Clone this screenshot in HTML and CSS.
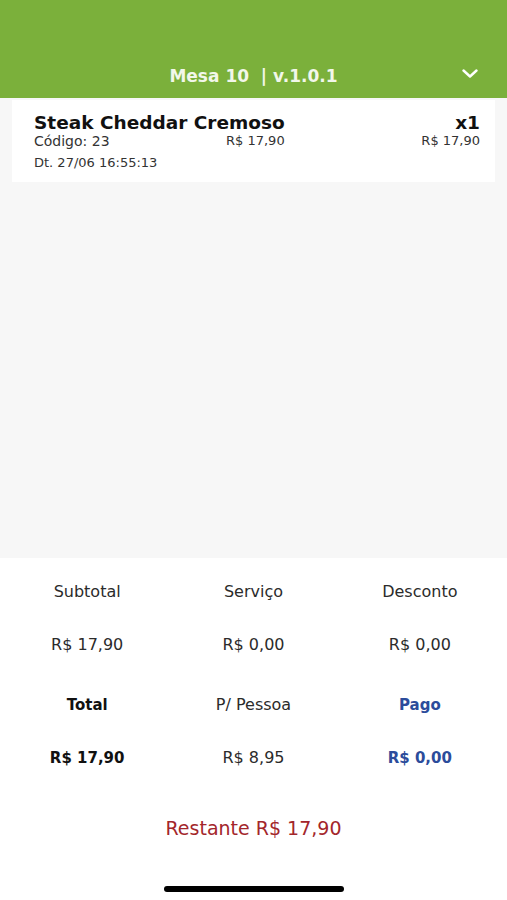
FILE: index.html
```html
<!DOCTYPE html>
<html>
  <head>
    <meta charset="utf-8">
    <link rel="stylesheet" href="styles.css">
  </head>
  <body>
    <div class="app">
      <div class="header">
        <div class="title">Mesa 10 &nbsp;| v.1.0.1</div>
        <svg class="chevron" width="16" height="9" viewBox="0 0 16 9">
          <polyline points="1.5,1.5 8,7.5 14.5,1.5" fill="none" stroke="#ffffff" stroke-width="2.4" stroke-linecap="round" stroke-linejoin="round"/>
        </svg>
      </div>

      <div class="orders">
        <div class="item">
          <div class="item-row">
            <div class="item-name">Steak Cheddar Cremoso</div>
            <div class="item-qty">x1</div>
          </div>
          <div class="item-row small">
            <div class="col-code">Código: 23</div>
            <div class="col-unit">R$ 17,90</div>
            <div class="col-total">R$ 17,90</div>
          </div>
          <div class="item-date">Dt. 27/06 16:55:13</div>
        </div>
      </div>

      <div class="summary">
        <div class="grid">
          <div class="cell">Subtotal</div>
          <div class="cell">Serviço</div>
          <div class="cell">Desconto</div>
          <div class="cell">R$ 17,90</div>
          <div class="cell">R$ 0,00</div>
          <div class="cell">R$ 0,00</div>
        </div>
        <div class="grid second">
          <div class="cell strong">Total</div>
          <div class="cell">P/ Pessoa</div>
          <div class="cell strong paid">Pago</div>
          <div class="cell strong">R$ 17,90</div>
          <div class="cell">R$ 8,95</div>
          <div class="cell strong paid">R$ 0,00</div>
        </div>
        <div class="remaining">Restante R$ 17,90</div>
        <div class="home-bar"></div>
      </div>
    </div>
  </body>
</html>
```

FILE: styles.css
```css
html, body {
  margin: 0;
  padding: 0;
}

body {
  font-family: "DejaVu Sans", "Liberation Sans", sans-serif;
  color: #1a1a1a;
  background-color: white;
}

.app {
  width: 507px;
  height: 900px;
  display: flex;
  flex-direction: column;
  overflow: hidden;
}

/* top bar */
.header {
  height: 98px;
  flex: none;
  background-color: #7bb03b;
  display: flex;
  align-items: flex-end;
  justify-content: center;
  position: relative;
}

.title {
  color: #f2f7ea;
  font-size: 17px;
  font-weight: bold;
  line-height: 22px;
  margin-bottom: 11px;
}

.chevron {
  position: absolute;
  right: 29px;
  top: 69px;
}

/* order list */
.orders {
  height: 460px;
  flex: none;
  background-color: #f7f7f7;
  padding: 2px 12px 0 12px;
  box-sizing: border-box;
}

.item {
  background-color: white;
  height: 82px;
  box-sizing: border-box;
  padding: 13px 15px 0 22px;
}

.item-row {
  display: flex;
  justify-content: space-between;
}

.item-name, .item-qty {
  font-size: 18.5px;
  font-weight: bold;
  line-height: 20px;
  color: #111;
}

.item-row.small {
  font-size: 13px;
  line-height: 16px;
  color: #333;
}

.col-code {
  width: 192px;
  font-size: 14px;
}

.col-unit {
  flex: 1;
}

.item-date {
  font-size: 13px;
  line-height: 16px;
  color: #333;
  margin-top: 6px;
}

/* totals */
.summary {
  flex: 1;
  padding: 24px 4px 0 4px;
  display: flex;
  flex-direction: column;
  align-items: center;
}

.grid {
  width: 100%;
  display: grid;
  grid-template-columns: 1fr 1fr 1fr;
  grid-auto-rows: 20px;
  row-gap: 33px;
}

.grid.second {
  margin-top: 40px;
}

.cell {
  text-align: center;
  font-size: 16px;
  line-height: 20px;
  color: #2b2b2b;
}

.cell.strong {
  font-size: 15px;
  font-weight: bold;
  color: #111;
}

.cell.paid {
  color: #2b4c9b;
}

.remaining {
  margin-top: 48px;
  font-size: 19px;
  line-height: 24px;
  color: #a3262b;
}

.home-bar {
  margin-top: 46px;
  width: 180px;
  height: 6px;
  border-radius: 3px;
  background-color: #000;
}
```
